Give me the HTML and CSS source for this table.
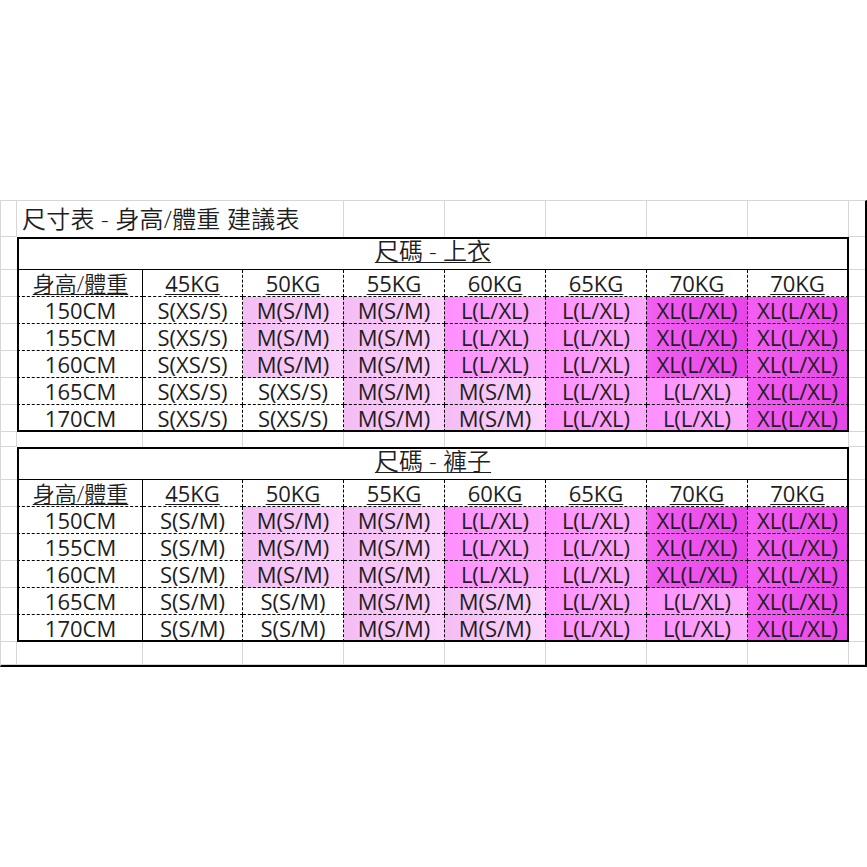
FILE: index.html
```html
<!DOCTYPE html>
<html lang="zh-Hant">
<head>
<meta charset="utf-8">
<title>尺寸表</title>
<link rel="stylesheet" href="styles.css">
</head>
<body>
<div class="sheet">
  <!-- row 1: title -->
  <div class="g"></div>
  <div class="title s3 cjk">尺寸表 - 身高/體重 建議表</div>
  <div class="g nb"></div><div class="g nb"></div><div class="g nb"></div><div class="g nb"></div><div class="g nb"></div>
  <div class="g j"></div>

  <!-- table 1 -->
  <div class="g a"></div><div class="tt cjk"><u>尺碼 - 上衣</u></div><div class="g j"></div>

  <div class="g a"></div>
  <div class="c f h cjk"><u>身高/體重</u></div><div class="c h"><u>45KG</u></div><div class="c h"><u>50KG</u></div><div class="c h"><u>55KG</u></div><div class="c h"><u>60KG</u></div><div class="c h"><u>65KG</u></div><div class="c h"><u>70KG</u></div><div class="c l h"><u>70KG</u></div>
  <div class="g j"></div>

  <div class="g a"></div>
  <div class="c f">150CM</div><div class="c">S(XS/S)</div><div class="c m">M(S/M)</div><div class="c m">M(S/M)</div><div class="c lg">L(L/XL)</div><div class="c lg">L(L/XL)</div><div class="c xl">XL(L/XL)</div><div class="c l xl">XL(L/XL)</div>
  <div class="g j"></div>

  <div class="g a"></div>
  <div class="c f">155CM</div><div class="c">S(XS/S)</div><div class="c m">M(S/M)</div><div class="c m">M(S/M)</div><div class="c lg">L(L/XL)</div><div class="c lg">L(L/XL)</div><div class="c xl">XL(L/XL)</div><div class="c l xl">XL(L/XL)</div>
  <div class="g j"></div>

  <div class="g a"></div>
  <div class="c f">160CM</div><div class="c">S(XS/S)</div><div class="c m">M(S/M)</div><div class="c m">M(S/M)</div><div class="c lg">L(L/XL)</div><div class="c lg">L(L/XL)</div><div class="c xl">XL(L/XL)</div><div class="c l xl">XL(L/XL)</div>
  <div class="g j"></div>

  <div class="g a"></div>
  <div class="c f">165CM</div><div class="c">S(XS/S)</div><div class="c">S(XS/S)</div><div class="c m">M(S/M)</div><div class="c m">M(S/M)</div><div class="c lg">L(L/XL)</div><div class="c lg">L(L/XL)</div><div class="c l xl">XL(L/XL)</div>
  <div class="g j"></div>

  <div class="g a"></div>
  <div class="c f b">170CM</div><div class="c b">S(XS/S)</div><div class="c b">S(XS/S)</div><div class="c b m">M(S/M)</div><div class="c b m">M(S/M)</div><div class="c b lg">L(L/XL)</div><div class="c b lg">L(L/XL)</div><div class="c b l xl">XL(L/XL)</div>
  <div class="g j"></div>

  <!-- gap -->
  <div class="g"></div>
  <div class="g nb"></div><div class="g nb"></div><div class="g nb"></div><div class="g nb"></div><div class="g nb"></div><div class="g nb"></div><div class="g nb"></div><div class="g nb"></div>
  <div class="g j"></div>

  <!-- table 2 -->
  <div class="g a"></div><div class="tt cjk"><u>尺碼 - 褲子</u></div><div class="g j"></div>

  <div class="g a"></div>
  <div class="c f h cjk"><u>身高/體重</u></div><div class="c h"><u>45KG</u></div><div class="c h"><u>50KG</u></div><div class="c h"><u>55KG</u></div><div class="c h"><u>60KG</u></div><div class="c h"><u>65KG</u></div><div class="c h"><u>70KG</u></div><div class="c l h"><u>70KG</u></div>
  <div class="g j"></div>

  <div class="g a"></div>
  <div class="c f">150CM</div><div class="c">S(S/M)</div><div class="c m">M(S/M)</div><div class="c m">M(S/M)</div><div class="c lg">L(L/XL)</div><div class="c lg">L(L/XL)</div><div class="c xl">XL(L/XL)</div><div class="c l xl">XL(L/XL)</div>
  <div class="g j"></div>

  <div class="g a"></div>
  <div class="c f">155CM</div><div class="c">S(S/M)</div><div class="c m">M(S/M)</div><div class="c m">M(S/M)</div><div class="c lg">L(L/XL)</div><div class="c lg">L(L/XL)</div><div class="c xl">XL(L/XL)</div><div class="c l xl">XL(L/XL)</div>
  <div class="g j"></div>

  <div class="g a"></div>
  <div class="c f">160CM</div><div class="c">S(S/M)</div><div class="c m">M(S/M)</div><div class="c m">M(S/M)</div><div class="c lg">L(L/XL)</div><div class="c lg">L(L/XL)</div><div class="c xl">XL(L/XL)</div><div class="c l xl">XL(L/XL)</div>
  <div class="g j"></div>

  <div class="g a"></div>
  <div class="c f">165CM</div><div class="c">S(S/M)</div><div class="c">S(S/M)</div><div class="c m">M(S/M)</div><div class="c m">M(S/M)</div><div class="c lg">L(L/XL)</div><div class="c lg">L(L/XL)</div><div class="c l xl">XL(L/XL)</div>
  <div class="g j"></div>

  <div class="g a"></div>
  <div class="c f b">170CM</div><div class="c b">S(S/M)</div><div class="c b">S(S/M)</div><div class="c b m">M(S/M)</div><div class="c b m">M(S/M)</div><div class="c b lg">L(L/XL)</div><div class="c b lg">L(L/XL)</div><div class="c b l xl">XL(L/XL)</div>
  <div class="g j"></div>

  <!-- bottom gap -->
  <div class="g"></div>
  <div class="g"></div><div class="g"></div><div class="g"></div><div class="g"></div><div class="g"></div><div class="g"></div><div class="g"></div><div class="g"></div>
  <div class="g j"></div>
</div>
</body>
</html>
```

FILE: styles.css
```css
* { box-sizing: border-box; }

html, body {
  margin: 0;
  padding: 0;
  background: #ffffff;
}

body {
  font-family: "Open Sans", "Noto Sans CJK TC", sans-serif;
  color: #1e1e1e;
}

.sheet {
  margin-top: 200px;
  width: 867px;
  display: grid;
  grid-template-columns: 16px 126px 100px repeat(6, 101px) 16px;
  grid-template-rows: 36px 33px repeat(6, 27px) 15px 33px repeat(6, 27px) 23px;
  border-top: 1px solid #d6d6d6;
  border-left: 1px solid #d6d6d6;
  border-right: 2px solid #000;
  border-bottom: 2px solid #000;
}

/* plain worksheet gridline cell */
.g {
  border-right: 1px solid #d6d6d6;
  border-bottom: 1px solid #d6d6d6;
}
.g.nb { border-bottom: none; }
.g.a { border-right: none; }
.g.j { border-right: none; }

.cjk { font-weight: 350; }

.title {
  grid-column: 2 / span 3;
  border-right: 1px solid #d6d6d6;
  font-size: 24px;
  line-height: 1;
  padding-left: 5px;
  display: flex;
  align-items: center;
  white-space: nowrap;
  letter-spacing: 0.2px;
}

/* table title (merged across the table) */
.tt {
  grid-column: 2 / span 8;
  border: 2px solid #000;
  border-bottom: 1px solid #000;
  display: flex;
  align-items: center;
  justify-content: center;
  font-size: 24px;
  line-height: 1;
  padding-bottom: 6px;
}
.tt u, .h u {
  text-decoration-thickness: 1px;
  text-underline-offset: 2px;
}

/* table cells */
.c {
  border-right: 1px dashed #000;
  border-bottom: 1px dashed #000;
  display: flex;
  align-items: center;
  justify-content: center;
  font-size: 22px;
  line-height: 1;
  white-space: nowrap;
}
.c.f {
  border-left: 2px solid #000;
  border-right: 1px solid #000;
}
.c.l { border-right: 2px solid #000; }
.c.b { border-bottom: 2px solid #000; }

/* size fills */
.m  { background: linear-gradient(90deg, #f4bdf4 0%, #fbd3fb 100%); }
.lg { background: linear-gradient(90deg, #ff8fff 0%, #fbadfb 100%); }
.xl { background: linear-gradient(90deg, #f25ef2 0%, #e845e8 100%); }
```
